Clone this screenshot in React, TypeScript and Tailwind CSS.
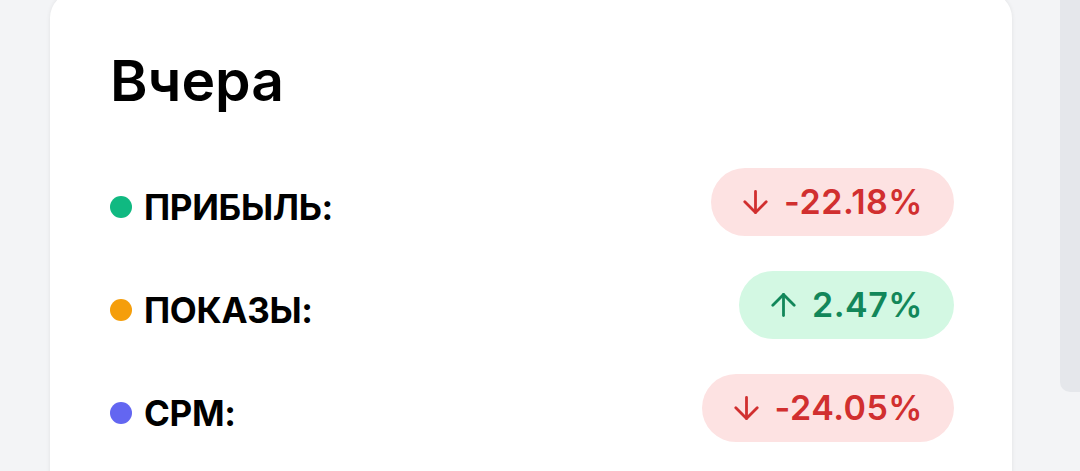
import React from 'react';

type Row = { label: string; dot: string; value: string; up: boolean };

const rows: Row[] = [
  { label: 'ПРИБЫЛЬ:', dot: 'bg-[#10b981]', value: '-22.18%', up: false },
  { label: 'ПОКАЗЫ:', dot: 'bg-[#f59e0b]', value: '2.47%', up: true },
  { label: 'CPM:', dot: 'bg-[#6366f1]', value: '-24.05%', up: false },
];

function Arrow({ up }: { up: boolean }) {
  return (
    <svg width="25" height="24" viewBox="0 0 25 24" fill="none" stroke="currentColor" strokeWidth="2.8" strokeLinecap="round" strokeLinejoin="round">
      {up ? (
        <>
          <path d="M12.5 22.5V1.5" />
          <path d="M1.8 12.2L12.5 1.5l10.7 10.7" />
        </>
      ) : (
        <>
          <path d="M12.5 1.5v21" />
          <path d="M1.8 11.8l10.7 10.7 10.7-10.7" />
        </>
      )}
    </svg>
  );
}

function Badge({ value, up }: { value: string; up: boolean }) {
  return (
    <div
      className={
        'flex h-[68px] items-center gap-[16px] rounded-full pl-[32px] pr-[31px] ' +
        (up ? 'bg-[#d3f8e3] text-[#12875a]' : 'bg-[#fde2e2] text-[#d12f2f]')
      }
    >
      <Arrow up={up} />
      <span className="text-[34px] font-semibold leading-none tracking-[0.5px]">{value}</span>
    </div>
  );
}

export default function App() {
  return (
    <div
      className="flex h-[471px] w-[1080px] overflow-hidden bg-[#f3f4f6]"
      style={{ fontFamily: 'Inter, "Noto Sans", sans-serif' }}
    >
      <div className="ml-[50px] -mt-2 h-[520px] w-[962px] rounded-[26px] bg-white pl-[60px] pr-[58px] pt-[60px] shadow-[0_0_4px_rgba(0,0,0,0.08)]">
        <h1 className="text-[57px] font-semibold leading-none text-black">Вчера</h1>
        <div className="mt-[59px] flex flex-col gap-[35px]">
          {rows.map((r) => (
            <div key={r.label} className="flex items-center justify-between">
              <div className="flex items-center gap-[12px] pt-[10px]">
                <span className={'h-[22px] w-[22px] rounded-full ' + r.dot} />
                <span className="text-[35px] font-bold leading-none tracking-[-0.3px] text-black">{r.label}</span>
              </div>
              <Badge value={r.value} up={r.up} />
            </div>
          ))}
        </div>
      </div>
      <div className="ml-[48px] h-[392px] w-[20px] rounded-bl-[10px] bg-[#e5e7eb]" />
    </div>
  );
}
